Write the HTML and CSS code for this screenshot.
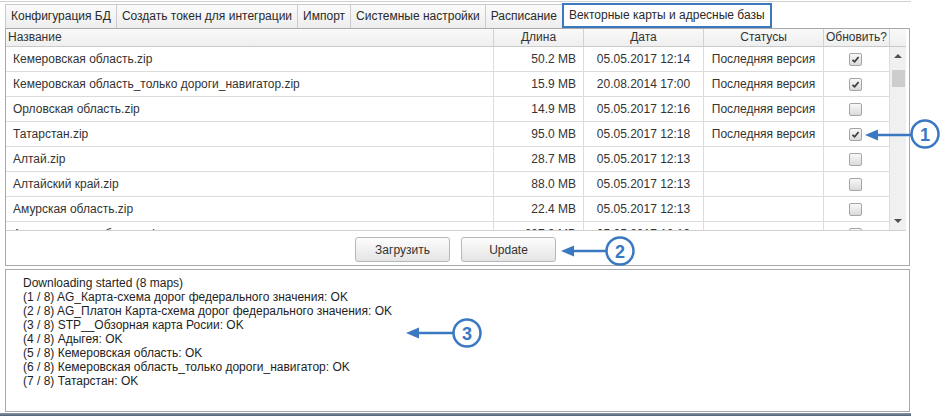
FILE: index.html
```html
<!DOCTYPE html>
<html lang="ru">
<head>
<meta charset="utf-8">
<title>Векторные карты и адресные базы</title>
<link rel="stylesheet" href="styles.css">
</head>
<body>
<div class="app">
  <div class="tabs">
    <div class="tab">Конфигурация БД</div>
    <div class="tab">Создать токен для интеграции</div>
    <div class="tab">Импорт</div>
    <div class="tab">Системные настройки</div>
    <div class="tab">Расписание</div>
    <div class="tab tab-active">Векторные карты и адресные базы</div>
  </div>

  <div class="panel">
    <div class="grid">
      <div class="grid-head">
        <div class="hc hc-name">Название</div>
        <div class="hc">Длина</div>
        <div class="hc">Дата</div>
        <div class="hc">Статусы</div>
        <div class="hc">Обновить?</div>
        <div class="hc hc-scroll"></div>
      </div>
      <div class="grid-body">
        <div class="rows">
          <div class="row"><div class="c c-name">Кемеровская область.zip</div><div class="c c-size">50.2 MB</div><div class="c c-mid">05.05.2017 12:14</div><div class="c c-mid">Последняя версия</div><div class="c c-mid"><span class="cb cb-on"><svg viewBox="0 0 11 11" width="11" height="11"><path d="M2.5 5.8 L4.6 7.8 L8.6 3" fill="none" stroke="#3a3a3a" stroke-width="1.7"/></svg></span></div></div>
          <div class="row"><div class="c c-name">Кемеровская область_только дороги_навигатор.zip</div><div class="c c-size">15.9 MB</div><div class="c c-mid">20.08.2014 17:00</div><div class="c c-mid">Последняя версия</div><div class="c c-mid"><span class="cb cb-on"><svg viewBox="0 0 11 11" width="11" height="11"><path d="M2.5 5.8 L4.6 7.8 L8.6 3" fill="none" stroke="#3a3a3a" stroke-width="1.7"/></svg></span></div></div>
          <div class="row"><div class="c c-name">Орловская область.zip</div><div class="c c-size">14.9 MB</div><div class="c c-mid">05.05.2017 12:16</div><div class="c c-mid">Последняя версия</div><div class="c c-mid"><span class="cb"></span></div></div>
          <div class="row"><div class="c c-name">Татарстан.zip</div><div class="c c-size">95.0 MB</div><div class="c c-mid">05.05.2017 12:18</div><div class="c c-mid">Последняя версия</div><div class="c c-mid"><span class="cb cb-on"><svg viewBox="0 0 11 11" width="11" height="11"><path d="M2.5 5.8 L4.6 7.8 L8.6 3" fill="none" stroke="#3a3a3a" stroke-width="1.7"/></svg></span></div></div>
          <div class="row"><div class="c c-name">Алтай.zip</div><div class="c c-size">28.7 MB</div><div class="c c-mid">05.05.2017 12:13</div><div class="c c-mid"></div><div class="c c-mid"><span class="cb"></span></div></div>
          <div class="row"><div class="c c-name">Алтайский край.zip</div><div class="c c-size">88.0 MB</div><div class="c c-mid">05.05.2017 12:13</div><div class="c c-mid"></div><div class="c c-mid"><span class="cb"></span></div></div>
          <div class="row"><div class="c c-name">Амурская область.zip</div><div class="c c-size">22.4 MB</div><div class="c c-mid">05.05.2017 12:13</div><div class="c c-mid"></div><div class="c c-mid"><span class="cb"></span></div></div>
          <div class="row"><div class="c c-name">Архангельская область.zip</div><div class="c c-size">297.3 MB</div><div class="c c-mid">05.05.2017 12:13</div><div class="c c-mid"></div><div class="c c-mid"><span class="cb"></span></div></div>
        </div>
        <div class="vscroll">
          <div class="vs-btn"><span class="arr-up"></span></div>
          <div class="vs-thumb"></div>
          <div class="vs-fill"></div>
          <div class="vs-btn"><span class="arr-down"></span></div>
        </div>
      </div>
    </div>
    <div class="actions">
      <button class="btn">Загрузить</button>
      <button class="btn">Update</button>
    </div>
  </div>

  <div class="log">
    <div>Downloading started (8 maps)</div>
    <div>(1 / 8) AG_Карта-схема дорог федерального значения: OK</div>
    <div>(2 / 8) AG_Платон Карта-схема дорог федерального значения: OK</div>
    <div>(3 / 8) STP__Обзорная карта Росии: OK</div>
    <div>(4 / 8) Адыгея: OK</div>
    <div>(5 / 8) Кемеровская область: OK</div>
    <div>(6 / 8) Кемеровская область_только дороги_навигатор: OK</div>
    <div>(7 / 8) Татарстан: OK</div>
  </div>

  <div class="taskbar"></div>

  <svg class="callouts" width="941" height="416" viewBox="0 0 941 416">
    <g class="callout">
      <line x1="874" y1="134" x2="911" y2="134"/>
      <polygon points="865,134 878,128.5 878,139.5"/>
      <circle cx="925" cy="133" r="13.5"/>
      <text x="925" y="139.5">1</text>
    </g>
    <g class="callout">
      <line x1="570" y1="250" x2="606" y2="250"/>
      <polygon points="561,250 574,244.5 574,255.5"/>
      <circle cx="620" cy="250" r="13.5"/>
      <text x="620" y="256.5">2</text>
    </g>
    <g class="callout">
      <line x1="415" y1="332" x2="453" y2="332"/>
      <polygon points="406,332 419,326.5 419,337.5"/>
      <circle cx="467" cy="332" r="13.5"/>
      <text x="467" y="338.5">3</text>
    </g>
  </svg>
</div>
</body>
</html>
```
FILE: styles.css
```css
* { box-sizing: border-box; }

html, body {
  margin: 0;
  padding: 0;
  background: #fff;
}

body {
  width: 941px;
  height: 416px;
  overflow: hidden;
  font-family: "Liberation Sans", Arial, sans-serif;
  font-size: 12px;
  color: #333;
}

.app {
  position: relative;
  width: 941px;
  height: 416px;
}

/* Tabs */
.tabs {
  display: flex;
  margin-top: 1px;
  width: 911px;
  border-top: 1px solid #cfcfcf;
  padding: 2px 0 0 5px;
  height: 27px;
}

.tab {
  height: 24px;
  line-height: 23px;
  padding: 0 5px;
  border: 1px solid #cbcbcb;
  border-bottom: none;
  margin-right: -1px;
  background: linear-gradient(#fbfbfb, #ededed);
  color: #2a2a2a;
  white-space: nowrap;
}

.tab-active {
  position: relative;
  margin-top: -1px;
  height: 25px;
  line-height: 21px;
  border: 2px solid #3c78c0;
  background: #fff;
  padding: 0 5px;
}

/* Main panel */
.panel {
  margin-left: 5px;
  width: 905px;
  height: 238px;
  border: 1px solid #a9a9a9;
  display: flex;
  flex-direction: column;
}

.grid {
  width: 900px;
}

.grid-head {
  display: grid;
  grid-template-columns: 488px 90px 120px 120px 66px 16px;
  height: 18px;
  border-bottom: 1px solid #cacaca;
  background: linear-gradient(#f9f9f9, #efefef);
}

.hc {
  border-right: 1px solid #d2d2d2;
  text-align: center;
  line-height: 17px;
  color: #333;
  white-space: nowrap;
}

.hc-name {
  text-align: left;
  padding-left: 2px;
}

.hc-scroll {
  border-right: none;
}

.grid-body {
  display: flex;
  height: 184px;
  border-bottom: 1px solid #d0d0d0;
}

.rows {
  width: 884px;
  height: 183px;
  overflow: hidden;
}

.row {
  display: grid;
  grid-template-columns: 488px 90px 120px 120px 66px;
  height: 25px;
  border-bottom: 1px solid #dcdcdc;
}

.c {
  border-right: 1px solid #dcdcdc;
  display: flex;
  align-items: center;
  white-space: nowrap;
  color: #333;
}

.c-name { padding-left: 7px; }
.c-size { justify-content: flex-end; padding-right: 7px; }
.c-mid { justify-content: center; }

.cb {
  width: 13px;
  height: 13px;
  border: 1px solid #a5a5a5;
  border-radius: 2px;
  background: linear-gradient(#f8f8f8, #dadada);
  display: flex;
  align-items: center;
  justify-content: center;
  margin-left: -3px;
}

.cb svg { display: block; }

/* Scrollbar */
.vscroll {
  width: 16px;
  height: 183px;
  background: #f0f0f0;
  display: flex;
  flex-direction: column;
  align-items: center;
}

.vs-btn {
  height: 18px;
  width: 16px;
  display: flex;
  align-items: center;
  justify-content: center;
}

.arr-up {
  width: 0;
  height: 0;
  border-left: 4px solid transparent;
  border-right: 4px solid transparent;
  border-bottom: 4px solid #505050;
}

.arr-down {
  width: 0;
  height: 0;
  border-left: 4px solid transparent;
  border-right: 4px solid transparent;
  border-top: 4px solid #505050;
}

.vs-thumb {
  margin-top: 5px;
  width: 13px;
  height: 17px;
  background: #cdcdcd;
}

.vs-fill { flex: 1; }

/* Buttons */
.actions {
  display: flex;
  justify-content: center;
  gap: 11px;
  padding-top: 6px;
  padding-right: 4px;
}

.btn {
  width: 95px;
  height: 25px;
  border: 1px solid #b8b8b8;
  border-radius: 3px;
  background: linear-gradient(#fdfdfd, #e4e4e4);
  font-family: "Liberation Sans", Arial, sans-serif;
  font-size: 12px;
  color: #333;
  padding: 0;
}

/* Log */
.log {
  margin: 3px 0 0 5px;
  width: 905px;
  height: 143px;
  border: 1px solid #a9a9a9;
  padding: 6px 0 0 17px;
  line-height: 14px;
  color: #1e1e1e;
}

.taskbar {
  margin-top: 1px;
  width: 911px;
  height: 3px;
  background: linear-gradient(#8d9aab, #4f5f73);
}

/* Annotation callouts */
.callouts {
  position: absolute;
  left: 0;
  top: 0;
  pointer-events: none;
}

.callout line {
  stroke: #3b78c2;
  stroke-width: 2.5;
}

.callout polygon {
  fill: #3b78c2;
}

.callout circle {
  fill: #fff;
  stroke: #3b78c2;
  stroke-width: 2.5;
}

.callout text {
  fill: #3b78c2;
  font-family: "Liberation Sans", Arial, sans-serif;
  font-weight: bold;
  font-size: 18px;
  text-anchor: middle;
}
```
